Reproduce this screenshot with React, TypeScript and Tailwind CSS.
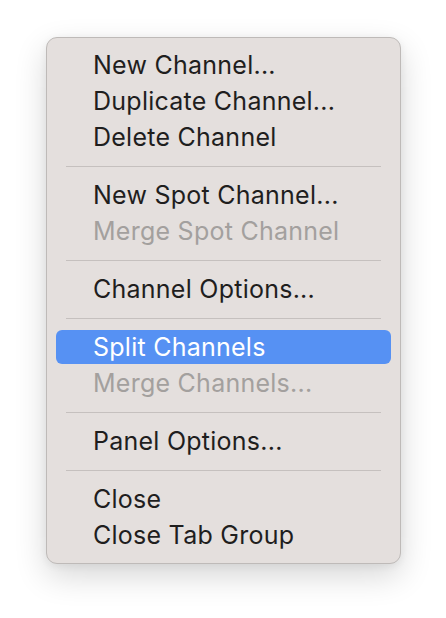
type Item = { label: string; disabled?: boolean; active?: boolean } | "sep";

const items: Item[] = [
  { label: "New Channel..." },
  { label: "Duplicate Channel..." },
  { label: "Delete Channel" },
  "sep",
  { label: "New Spot Channel..." },
  { label: "Merge Spot Channel", disabled: true },
  "sep",
  { label: "Channel Options..." },
  "sep",
  { label: "Split Channels", active: true },
  { label: "Merge Channels...", disabled: true },
  "sep",
  { label: "Panel Options..." },
  "sep",
  { label: "Close" },
  { label: "Close Tab Group" },
];

export default function App() {
  return (
    <div className="min-h-[618px] w-[446px] bg-white pl-[46px] pt-[37px] font-['Inter','Liberation_Sans',sans-serif]">
      <div className="w-[355px] rounded-[11px] border border-[#bebab8] bg-[#e4dfdd] px-[9px] pb-[10px] pt-[9px] shadow-[0_12px_32px_rgba(0,0,0,0.16),0_2px_8px_rgba(0,0,0,0.06)]">
        {items.map((it, i) =>
          it === "sep" ? (
            <div key={i} className="px-[10px] pb-[10px] pt-[11px]">
              <div className="h-px bg-[#c5c0be]" />
            </div>
          ) : (
            <div key={i} className="flex h-[36px] items-center py-px">
              <div
                className={`flex h-full w-full items-center rounded-[6px] pl-[37px] pt-[2px] text-[25px] tracking-[0.25px] ${
                  it.active
                    ? "bg-[#5691f3] text-white"
                    : it.disabled
                      ? "text-[#a3a09e]"
                      : "text-[#1f1e1e]"
                }`}
              >
                {it.label}
              </div>
            </div>
          )
        )}
      </div>
    </div>
  );
}
